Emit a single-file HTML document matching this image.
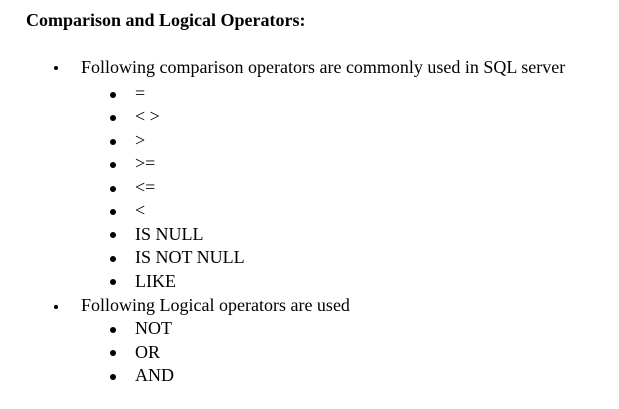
<!DOCTYPE html>
<html><head><style>
body{margin:0;width:619px;height:409px;background:#fff;font-family:"Liberation Serif",serif;color:#000;position:relative;overflow:hidden}
div{position:absolute;font-size:18px;line-height:20px;white-space:nowrap}
.d{width:6px;height:6px;border-radius:50%;background:#000}
.s{width:4px;height:4px;border-radius:50%;background:#000}
</style></head><body>
<div style="left:26px;top:10px;font-weight:bold">Comparison and Logical Operators:</div>
<div class="s" style="left:54px;top:66px"></div>
<div style="left:81px;top:57px">Following comparison operators are commonly used in SQL server</div>

<div class="d" style="left:110px;top:92px"></div><div style="left:135px;top:83px">=</div>
<div class="d" style="left:110px;top:115px"></div><div style="left:135px;top:106px">&lt; &gt;</div>
<div class="d" style="left:110px;top:139px"></div><div style="left:135px;top:130px">&gt;</div>
<div class="d" style="left:110px;top:162px"></div><div style="left:135px;top:153px">&gt;=</div>
<div class="d" style="left:110px;top:186px"></div><div style="left:135px;top:177px">&lt;=</div>
<div class="d" style="left:110px;top:209px"></div><div style="left:135px;top:200px">&lt;</div>
<div class="d" style="left:110px;top:232px"></div><div style="left:135px;top:224px">IS NULL</div>
<div class="d" style="left:110px;top:256px"></div><div style="left:135px;top:247px">IS NOT NULL</div>
<div class="d" style="left:110px;top:279px"></div><div style="left:135px;top:271px">LIKE</div>
<div class="s" style="left:54px;top:305px"></div>
<div style="left:81px;top:295px">Following Logical operators are used</div>
<div class="d" style="left:110px;top:327px"></div><div style="left:135px;top:318px">NOT</div>
<div class="d" style="left:110px;top:350px"></div><div style="left:135px;top:342px">OR</div>
<div class="d" style="left:110px;top:374px"></div><div style="left:135px;top:365px">AND</div>
</body></html>
